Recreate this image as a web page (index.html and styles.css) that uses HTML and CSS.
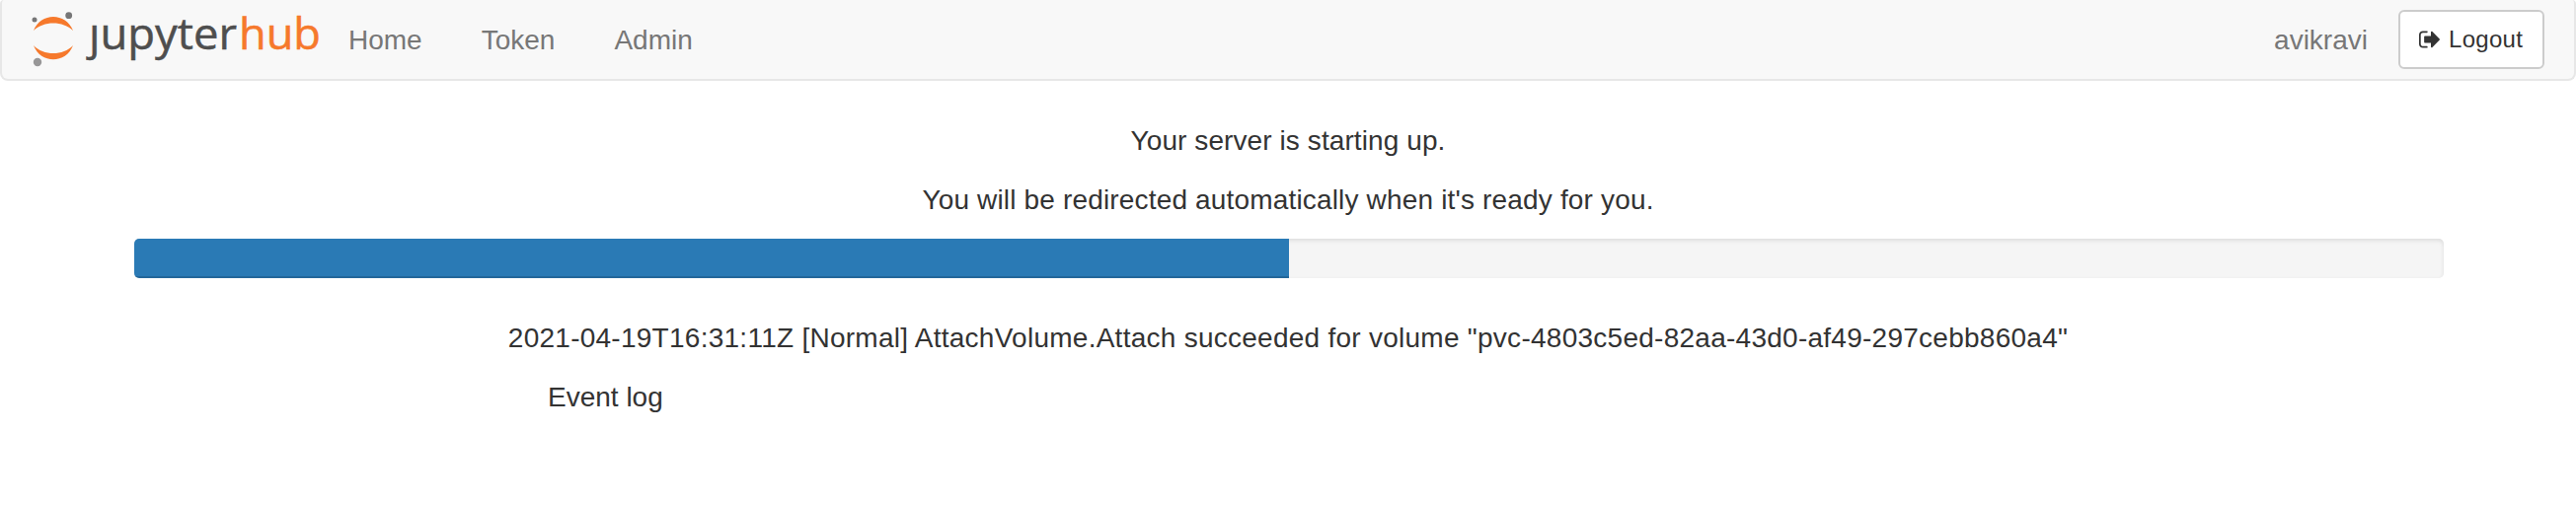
FILE: index.html
```html
<!DOCTYPE html>
<html lang="en">
<head>
<meta charset="utf-8">
<title>JupyterHub</title>
<link rel="stylesheet" href="styles.css">
</head>
<body>
<nav class="navbar">
  <a class="brand" aria-label="JupyterHub">
    <svg class="logo" width="310" height="80" viewBox="0 0 310 80">
      <g fill="#f6792c">
        <path d="M4 31 C11 12.300 37 12.300 44 31 C34 21 14 21 4 31Z"/>
        <path d="M4 46 C11 65 37 65 44 46 C34 56.700 14 56.700 4 46Z"/>
      </g>
      <circle cx="5" cy="20" r="2.500" fill="#767677"/>
      <circle cx="39.700" cy="15.700" r="3.400" fill="#767677"/>
      <circle cx="8" cy="63" r="4.200" fill="#989798"/>
      <text class="wordmark" x="60" y="50.400" textLength="150" lengthAdjust="spacingAndGlyphs">ȷupyter</text>
      <text class="wordmark hub" x="212" y="50.400" textLength="83" lengthAdjust="spacingAndGlyphs">hub</text>
    </svg>
  </a>
  <div class="links">
    <a class="link home">Home</a>
    <a class="link token">Token</a>
    <a class="link admin">Admin</a>
  </div>
  <div class="account">
    <span class="link user">avikravi</span>
    <a class="logout">
      <svg class="icon" width="24" height="24" viewBox="0 0 1792 1792" fill="#333"><path d="M640 1440q0 4 1 20t.5 26.500-3 23.500-10 19.500-20.500 6.500h-320q-119 0-203.500-84.500t-84.500-203.500v-704q0-119 84.500-203.500t203.500-84.500h320q13 0 22.500 9.500t9.500 22.500q0 4 1 20t.5 26.500-3 23.500-10 19.500-20.500 6.500h-320q-66 0-113 47t-47 113v704q0 66 47 113t113 47h312l11.500 1 11.500 3 8 5.500 7 9 2 13.500zm928-544q0 26-19 45l-544 544q-19 19-45 19t-45-19-19-45v-288h-448q-26 0-45-19t-19-45v-384q0-26 19-45t45-19h448v-288q0-26 19-45t45-19 45 19l544 544q19 19 19 45z"/></svg>
      <span class="logout-label">Logout</span>
    </a>
  </div>
</nav>
<main class="container">
  <p class="message starting">Your server is starting up.</p>
  <p class="message redirect">You will be redirected automatically when it's ready for you.</p>
  <div class="progress"><div class="progress-bar" style="width: 50%"></div></div>
  <p class="message event">2021-04-19T16:31:11Z [Normal] AttachVolume.Attach succeeded for volume "pvc-4803c5ed-82aa-43d0-af49-297cebb860a4"</p>
  <div class="log"><span class="log-title">Event log</span></div>
</main>
</body>
</html>
```
FILE: styles.css
```css
* { box-sizing: border-box; }
body {
  margin: 0;
  background: #fff;
  color: #333;
  font: 28px/40px "Liberation Sans", Arial, sans-serif;
}
.navbar {
  display: flex;
  height: 82px;
  padding: 0 30px 0 28px;
  background: #f8f8f8;
  border: 2px solid #e7e7e7;
  border-top: 0;
  border-radius: 4px 4px 8px 8px;
}
.brand { width: 310px; height: 80px; }
.logo { display: block; }
.wordmark {
  font-family: "Open Sans", sans-serif;
  font-size: 43.500px;
  fill: #4e4e4e;
  stroke: #4e4e4e;
  stroke-width: .5px;
}
.hub { fill: #f6792c; stroke: #f6792c; }
.links { display: flex; gap: 60px; padding: 21px 0 0 13px; }
.link { color: #777; white-space: nowrap; }
.account { display: flex; margin-left: auto; gap: 31px; padding-top: 10px; }
.user { padding-top: 11px; }
.logout {
  display: flex;
  align-items: center;
  width: 148px;
  height: 60px;
  padding-left: 19px;
  background: #fff;
  border: 2px solid #ccc;
  border-radius: 6px;
  font-size: 24px;
}
.icon { margin-right: 6px; }
.logout-label { letter-spacing: .3px; }
.container { width: 2340px; margin: 41px 0 0 136px; }
.message { margin: 0 0 20px; padding-right: 2px; text-align: center; white-space: nowrap; }
.starting { letter-spacing: .09px; }
.redirect { margin-bottom: 19px; letter-spacing: .165px; }
.event { letter-spacing: .26px; }
.progress {
  height: 40px;
  margin-bottom: 41px;
  overflow: hidden;
  background: #f5f5f5;
  border-radius: 5px;
  box-shadow: inset 0 2px 4px rgba(0, 0, 0, .1);
}
.progress-bar {
  height: 100%;
  background: #2a7ab5;
  box-shadow: inset 0 -2px 0 rgba(0, 0, 0, .15);
}
.log { padding-left: 419px; }
```
